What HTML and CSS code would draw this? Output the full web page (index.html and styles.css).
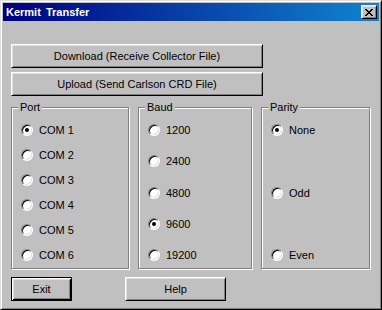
FILE: index.html
```html
<!DOCTYPE html>
<html lang="en">
<head>
    <meta charset="UTF-8">
    <title>Kermit Transfer</title>
    <link rel="stylesheet" href="styles.css">
</head>
<body>
    <div class="window">
        <div class="titlebar">
            <span class="title">Kermit Transfer</span>
            <button class="close" type="button" aria-label="Close">
                <svg width="8" height="7" viewBox="0 0 8 7">
                    <path d="M0 0h2v1h-2zM6 0h2v1h-2zM1 1h2v1h-2zM5 1h2v1h-2zM2 2h4v1h-4zM3 3h2v1h-2zM2 4h4v1h-4zM1 5h2v1h-2zM5 5h2v1h-2zM0 6h2v1h-2zM6 6h2v1h-2z" fill="#000"/>
                </svg>
            </button>
        </div>

        <div class="content">
            <div class="actions">
                <button class="btn wide" type="button">Download (Receive Collector File)</button>
                <button class="btn wide" type="button">Upload (Send Carlson CRD File)</button>
            </div>

            <div class="groups">
                <div class="group port">
                    <span class="legend">Port</span>
                    <label class="opt"><span class="radio checked"></span>COM 1</label>
                    <label class="opt"><span class="radio"></span>COM 2</label>
                    <label class="opt"><span class="radio"></span>COM 3</label>
                    <label class="opt"><span class="radio"></span>COM 4</label>
                    <label class="opt"><span class="radio"></span>COM 5</label>
                    <label class="opt"><span class="radio"></span>COM 6</label>
                </div>

                <div class="group baud">
                    <span class="legend">Baud</span>
                    <label class="opt"><span class="radio"></span>1200</label>
                    <label class="opt"><span class="radio"></span>2400</label>
                    <label class="opt"><span class="radio"></span>4800</label>
                    <label class="opt"><span class="radio checked"></span>9600</label>
                    <label class="opt"><span class="radio"></span>19200</label>
                </div>

                <div class="group parity">
                    <span class="legend">Parity</span>
                    <label class="opt"><span class="radio checked"></span>None</label>
                    <label class="opt"><span class="radio"></span>Odd</label>
                    <label class="opt"><span class="radio"></span>Even</label>
                </div>
            </div>

            <div class="footer">
                <button class="btn default exit" type="button">Exit</button>
                <button class="btn help" type="button">Help</button>
            </div>
        </div>
    </div>
</body>
</html>
```

FILE: styles.css
```css
* {
    box-sizing: border-box;
    margin: 0;
    padding: 0;
}

body {
    font-family: "Liberation Sans", Arial, sans-serif;
    font-size: 11px;
    color: #000;
    background-color: #c0c0c0;
}

.window {
    width: 382px;
    height: 310px;
    padding: 2px;
    background-color: #c0c0c0;
    border: 1px solid;
    border-color: #dfdfdf #000 #000 #dfdfdf;
    box-shadow: inset 1px 1px 0 #fff, inset -1px -1px 0 #808080;
}

.titlebar {
    height: 18px;
    display: flex;
    align-items: center;
    justify-content: space-between;
    padding: 0 2px 0 3px;
    background: linear-gradient(to right, #000080, #1084d0);
}

.title {
    color: #fff;
    font-weight: bold;
    font-size: 11px;
    word-spacing: 2px;
}

.close {
    width: 16px;
    height: 14px;
    display: flex;
    align-items: center;
    justify-content: center;
    background-color: #c0c0c0;
    border: 1px solid;
    border-color: #fff #000 #000 #fff;
    box-shadow: inset 1px 1px 0 #dfdfdf, inset -1px -1px 0 #808080;
}

.close svg {
    display: block;
    margin: 0 0 0 -1px;
}

.content {
    padding: 23px 8px 0 8px;
}

.actions {
    display: flex;
    flex-direction: column;
    gap: 4px;
}

.btn {
    height: 24px;
    font-family: inherit;
    font-size: 11px;
    color: #000;
    background-color: #c0c0c0;
    border: 1px solid;
    border-color: #fff #000 #000 #fff;
    box-shadow: inset 1px 1px 0 #dfdfdf, inset -1px -1px 0 #808080;
}

.wide {
    width: 252px;
}

.groups {
    display: flex;
    gap: 9px;
    margin-top: 11px;
}

.group {
    position: relative;
    height: 162px;
    display: flex;
    flex-direction: column;
    justify-content: space-between;
    padding: 15px 0 6px 9px;
    border: 1px solid #808080;
    box-shadow: 1px 1px 0 #fff, inset 1px 1px 0 #fff;
}

.port {
    width: 118px;
}

.baud {
    width: 114px;
}

.parity {
    width: 109px;
}

.legend {
    position: absolute;
    top: -7px;
    left: 6px;
    padding: 0 2px;
    line-height: 13px;
    background-color: #c0c0c0;
}

.opt {
    height: 14px;
    display: flex;
    align-items: center;
    gap: 6px;
}

.radio {
    position: relative;
    width: 12px;
    height: 12px;
    flex: none;
    border-radius: 50%;
    background-color: #fff;
    border: 1px solid;
    border-color: #808080 #fff #fff #808080;
    box-shadow: inset 1px 1px 0 #000, inset -1px -1px 0 #dfdfdf;
}

.radio.checked::after {
    content: "";
    position: absolute;
    left: 3px;
    top: 3px;
    width: 4px;
    height: 4px;
    border-radius: 50%;
    background-color: #000;
}

.footer {
    display: flex;
    gap: 53px;
    margin-top: 8px;
}

.exit {
    width: 61px;
}

.default {
    border: 1px solid #000;
    box-shadow: inset 1px 1px 0 #fff, inset -1px -1px 0 #000, inset 2px 2px 0 #dfdfdf, inset -2px -2px 0 #808080;
}

.help {
    width: 101px;
}
```
